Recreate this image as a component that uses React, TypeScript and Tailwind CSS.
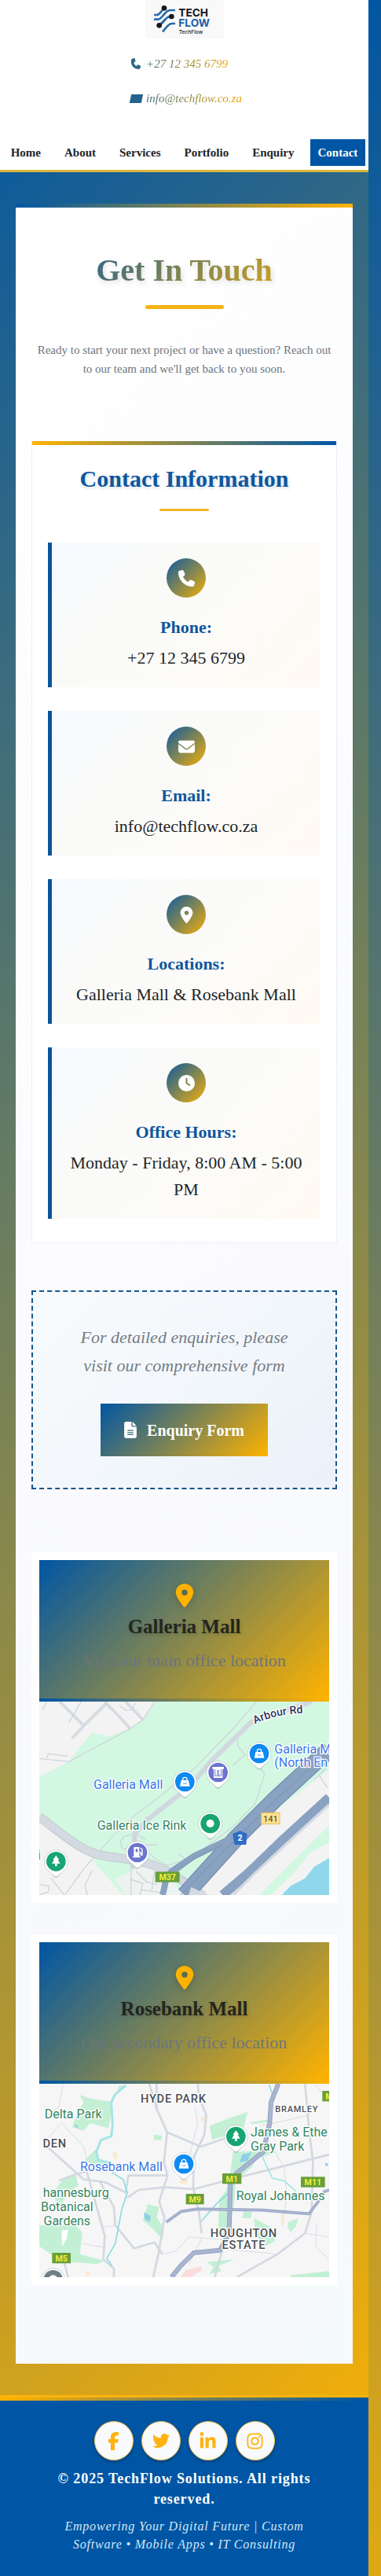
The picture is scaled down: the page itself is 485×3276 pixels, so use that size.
import type { ReactNode } from "react";
import {
  FaPhone,
  FaEnvelope,
  FaLocationDot,
  FaClock,
  FaFileLines,
  FaFacebookF,
  FaTwitter,
  FaLinkedinIn,
  FaInstagram,
} from "react-icons/fa6";

const navItems = ["Home", "About", "Services", "Portfolio", "Enquiry", "Contact"];

const details = [
  { label: "Phone:", value: "+27 12 345 6799", icon: <FaPhone size={21} /> },
  { label: "Email:", value: "info@techflow.co.za", icon: <FaEnvelope size={21} /> },
  { label: "Locations:", value: "Galleria Mall & Rosebank Mall", icon: <FaLocationDot size={21} /> },
  { label: "Office Hours:", value: "Monday - Friday, 8:00 AM - 5:00 PM", icon: <FaClock size={21} /> },
];

const socials = [
  { name: "Facebook", icon: <FaFacebookF size={23} /> },
  { name: "Twitter", icon: <FaTwitter size={22} /> },
  { name: "LinkedIn", icon: <FaLinkedinIn size={23} /> },
  { name: "Instagram", icon: <FaInstagram size={23} /> },
];

function Logo() {
  return (
    <svg viewBox="555 0 300 147" className="h-[49px] w-[100px]" role="img" aria-label="TechFlow">
      <rect x="555" y="0" width="300" height="147" fill="#f9f9f9" />
      <g fill="none" stroke="#2b6cab" strokeWidth="8">
        <path d="M588 57h10c8 0 12-6 17-12l10-13" />
        <path d="M588 74h14c10 0 14-7 20-14l12-13c5-6 9-8 18-8h17" />
        <path d="M610 97l14-14c7-8 12-18 22-19h8" />
        <path d="M621 121l18-21c6-7 9-10 17-10h13" />
        <path d="M607 98l26-26" />
      </g>
      <g fill="#15171c">
        <circle cx="627" cy="31" r="10" />
        <circle cx="655" cy="63" r="10" />
        <circle cx="608" cy="97" r="10" />
      </g>
      <g fontFamily="Inter, sans-serif" fontWeight="700">
        <text x="682" y="64" fontSize="41" fill="#15171c">TECH</text>
        <text x="682" y="102" fontSize="41" fill="#1d5fa6">FLOW</text>
        <text x="683" y="129" fontSize="20" fontWeight="500" fill="#15171c">TechFlow</text>
      </g>
    </svg>
  );
}

function Pin({ x, y, color, children }: { x: number; y: number; color: string; children?: ReactNode }) {
  return (
    <g transform={`translate(${x} ${y})`}>
      <path d="M0 62c-8 0-12-10-24-21A46 46 0 1 1 24 41C12 52 8 62 0 62z" fill="#8b9399" opacity="0.45" />
      <path d="M0 57c-8 0-12-8-24-18A44 44 0 1 1 24 39C12 49 8 57 0 57z" fill="#fff" />
      <circle r="37" fill={color} />
      {children}
    </g>
  );
}

function Bag() {
  return (
    <g>
      <path d="M-14-6h28l5 23h-38z" fill="#fff" />
      <path d="M-8-5v-4a8 8 0 0 1 16 0v4" fill="none" stroke="#fff" strokeWidth="4" />
      <path d="M-6 3c1 6 11 6 12 0" fill="none" stroke="#0d8bf2" strokeWidth="3" />
    </g>
  );
}

function Tree() {
  return <path d="M0-23L12-6H7l9 14H4v10h-8V8h-12l9-14h-5z" fill="#fff" />;
}

function Shield({ x, y, w, label }: { x: number; y: number; w: number; label: string }) {
  return (
    <g>
      <rect x={x} y={y} width={w} height="40" fill="#689f38" />
      <text x={x + w / 2} y={y + 32} textAnchor="middle" fontSize="32" fontWeight="700" fill="#f4ee3a">
        {label}
      </text>
    </g>
  );
}

function GalleriaMap() {
  return (
    <svg
      viewBox="150 42 1107 738"
      preserveAspectRatio="xMidYMid slice"
      className="block h-[246px] w-full"
      fontFamily="Roboto, sans-serif"
      role="img"
      aria-label="Map of Galleria Mall"
    >
      <rect x="150" y="42" width="1107" height="738" fill="#f4f3f4" />
      <path d="M590 42H1257V640L640 780H520L150 480V330L262 270L350 160L420 174L496 144L545 110z" fill="#d3f8e2" />
      <path d="M150 480L380 640L150 700z" fill="#f4f3f4" />
      <path d="M355 650L450 690L520 780H470z" fill="#d3f8e2" />
      <path d="M560 660L640 700L700 780H480L440 720z" fill="#eef3f1" />
      <path d="M1257 300V780H690L880 590z" fill="#f4f3f4" />
      <path d="M1257 515L1190 580L990 780H1035L1130 690L1180 620L1257 580z" fill="#d3f8e2" />
      <path d="M1257 638L1200 672L1165 716L1110 745L1076 780H1257z" fill="#8fd8ec" />
      <g fill="none" stroke="#d5dbe1" strokeWidth="11">
        <path d="M228 42L320 134L405 50M400 42L458 102L496 144M480 42L545 110M320 134L275 182" />
      </g>
      <g fill="none" stroke="#cfd5db" strokeWidth="4">
        <path d="M310 42L262 124M455 56L482 76L502 74L518 48M162 76L178 42M590 42L545 112L496 146L262 271L150 259M178 258L185 241L260 250M352 686L324 745L334 780M420 70L402 48" />
        <path d="M980 42L900 135L750 290L600 412L510 480L440 545L320 680L248 780" />
        <path d="M908 180V210L935 245L890 285M990 285L1010 320L975 430L900 510L740 635L640 667L590 640L540 590L600 588M540 590L500 598L470 605L458 578L475 555L520 545L555 570M680 620L705 642M500 680V780M520 690L560 730L600 740M540 760L610 770M500 720L545 735L535 780M590 690L580 760M1200 340L1250 290M1220 325L1250 370M150 740L188 745L184 768L150 780M195 715L245 780" />
      </g>
      <path d="M150 482C240 548 310 612 385 628S550 640 640 690L760 765" fill="none" stroke="#c2cad2" strokeWidth="34" />
      <path d="M150 482C240 548 310 612 385 628S550 640 640 690L780 780" fill="none" stroke="#d3dae2" strokeWidth="28" />
      <path d="M1190 42L960 120L810 265L720 370L560 495L515 545L505 680" fill="none" stroke="#d2d7df" strokeWidth="19" />
      <path d="M1257 225L1050 415L900 565L705 780" fill="none" stroke="#7890b0" strokeWidth="65" />
      <path d="M1257 225L1050 415L900 565L705 780" fill="none" stroke="#8aa2c1" strokeWidth="57" />
      <path d="M1257 228L1050 418L900 568L690 780" fill="none" stroke="#7890b0" strokeWidth="3" />
      <path d="M890 560L740 632L655 690C625 715 635 740 620 780" fill="none" stroke="#8aa2c1" strokeWidth="24" />
      <path d="M850 588L740 644L665 700" fill="none" stroke="#7890b0" strokeWidth="3" />
      <path d="M1257 408L1080 570L950 695L850 780" fill="none" stroke="#8aa2c1" strokeWidth="36" />
      <path d="M1257 435L1090 588L970 700L890 780" fill="none" stroke="#d3dae2" strokeWidth="10" />
      <path d="M730 750L800 780H720z" fill="#d3dae2" />
      <g strokeLinejoin="round" strokeWidth="8" stroke="#fff" paintOrder="stroke">
        <defs>
          <path id="arbour" d="M974 128Q1042 92 1150 86" />
        </defs>
        <text fontSize="42" fontWeight="500" fill="#273459">
          <textPath href="#arbour">Arbour Rd</textPath>
        </text>
        <g fontSize="48" fill="#3b78e7">
          <text x="357" y="375">Galleria Mall</text>
          <text x="1048" y="240">Galleria M</text>
          <text x="1048" y="292">(North En</text>
        </g>
        <text x="371" y="532" fontSize="48" fill="#348561">Galleria Ice Rink</text>
        <text x="156" y="644" fontSize="48" textAnchor="end" fill="#348561">i</text>
      </g>
      <Pin x={706} y={348} color="#0d8bf2"><Bag /></Pin>
      <Pin x={990} y={240} color="#0d8bf2"><Bag /></Pin>
      <Pin x={833} y={312} color="#6b74ce">
        <path d="M-22-21h44v8h-5v34h-34v-34h-5z" fill="#fff" />
        <path d="M-12-12v25h24v-25M0-10v22M-5-5H5M-5 6H5" fill="none" stroke="#6b74ce" strokeWidth="3" />
      </Pin>
      <Pin x={803} y={507} color="#17a673"><circle r="15" fill="#fff" /></Pin>
      <Pin x={525} y={618} color="#6b74ce">
        <path d="M-14-21H7v35h4v5h-29v-5h4z" fill="#fff" />
        <path d="M-7-14H1V-2H-7z" fill="#6b74ce" />
        <path d="M8 0h5v9h5v-20l-6-7" fill="none" stroke="#fff" strokeWidth="4" />
      </Pin>
      <Pin x={214} y={652} color="#17a673"><Tree /></Pin>
      <rect x="998" y="466" width="70" height="43" fill="#fde293" stroke="#e4bd4f" strokeWidth="3" />
      <text x="1033" y="500" textAnchor="middle" fontSize="33" fontWeight="500" fill="#6d5a28">141</text>
      <path d="M917 535L944 546L940 588H895L889 546z" fill="#2f6cc4" />
      <text x="917" y="574" textAnchor="middle" fontSize="32" fontWeight="700" fill="#fff">2</text>
      <Shield x={593} y={691} w={93} label="M37" />
    </svg>
  );
}

function RosebankMap() {
  return (
    <svg
      viewBox="150 30 1107 738"
      preserveAspectRatio="xMidYMid slice"
      className="block h-[246px] w-full"
      fontFamily="Roboto, sans-serif"
      role="img"
      aria-label="Map of Rosebank Mall"
    >
      <rect x="150" y="30" width="1107" height="738" fill="#f6f6f7" />
      <g fill="#c3f0d5">
        <path d="M302 72L350 88L430 98L415 200L345 180L318 210L275 195L300 130L320 100z" />
        <path d="M800 190L880 160L945 138L930 200L880 225L810 243z" />
        <path d="M588 224L620 228L615 246L588 244z" />
        <path d="M890 290L1000 285L960 350L900 400L895 480L870 610L832 600L838 470L862 440L880 370z" />
        <path d="M955 178L1030 165V176L960 184zM990 285L1060 290L1000 310z" />
        <path d="M565 490L608 500L598 540L625 580L622 625L590 590L545 550z" />
        <path d="M930 515L962 518L958 543H925zM970 543L1040 580L1050 630L1010 652L975 600zM1100 558L1138 543L1130 575L1110 597L1098 578z" />
        <path d="M150 570H290L315 600L305 680L400 705L370 718L290 712H240L150 650z" />
        <path d="M250 385L290 378L300 420L260 440L220 520L205 440z" />
        <path d="M325 320L365 280L372 320L405 330L390 345L350 335zM790 710L895 700L835 725L845 745L800 757L815 730zM1110 760L1257 745V768H1110zM455 35L475 40L450 60z" />
      </g>
      <path d="M690 768L710 740L770 726L772 740L730 768z" fill="#fbdcdc" />
      <g fill="#fbe9cf">
        <path d="M768 155h14v20h-14zM432 290h14v30l-14-8zM685 395h30v18l-30-4zM322 745l24 6-10 17zM1075 510l12 4-4 58h-10z" />
      </g>
      <g fill="#8dd0e6">
        <path d="M925 300L960 292L945 325L915 330zM550 520L575 535L572 558L552 545zM245 585l18 2-14 12zM285 183l14 10-10 5z" />
        <circle cx="1247" cy="338" r="6" />
      </g>
      <path d="M235 590l25-5-5 35-18 30z" fill="#fff" />
      <g fill="none" stroke="#d3d8e1" strokeWidth="8" strokeLinejoin="round">
        <path d="M570 30L600 130L638 215L626 330L640 380L625 425L608 480L628 540L605 680L585 768" />
        <path d="M598 30V130M755 30L760 80L788 150L780 225L740 310L738 430L760 520L770 600" />
        <path d="M638 215L768 270L870 235M485 465L530 435L630 425L740 432L900 390L1060 350L1257 300" />
        <path d="M180 270L320 395L400 405L480 445L490 380L640 380" />
        <path d="M330 360L400 610L395 700L435 735V768M380 400L435 500L440 570L512 658L590 635L620 680" />
        <path d="M1165 30L1180 200L1195 330L1190 520L1165 600L1060 680L980 725L905 768M850 660L820 768M245 710L260 768M225 400L290 375L345 360" />
      </g>
      <g fill="none" stroke="#d9dde4" strokeWidth="3">
        <path d="M240 30L225 120L180 150M180 240L235 180L320 270L340 360M725 300L755 180L745 120M1000 190L1180 150M1045 280L1085 350L1095 450L1085 530M1165 600L1257 615M1210 560L1205 650L1257 700M620 680L670 670L720 615L860 625M850 660L1060 680M720 720L770 620M316 640L400 655M390 578L440 570M1205 35L1257 95" />
      </g>
      <g fill="none" stroke="#a4e5e5" strokeWidth="9">
        <path d="M480 36L440 70L425 100L430 190L425 230L385 245L368 290L375 320L410 330" />
        <path d="M1000 305L1040 390L1085 400L1130 440" strokeWidth="5" />
      </g>
      <path d="M410 325L430 370L470 395L486 445L465 510L440 640L408 695L428 725M870 450L830 485L768 555M1028 34L1040 70" fill="none" stroke="#8edbe5" strokeWidth="5" />
      <g fill="none" strokeLinejoin="round">
        <path d="M1063 30L1035 100L1030 180L1005 290L905 370L880 405L875 600L840 665L740 675L690 725L655 768" stroke="#95a3c2" strokeWidth="18" />
        <path d="M1063 30L1035 100L1030 180L1005 290L905 370L880 405L875 600L840 665L740 675L690 725L655 768" stroke="#a9b5d1" strokeWidth="12" />
        <path d="M635 558L690 518L750 508L1000 512L1180 526L1215 480L1240 440L1257 436" stroke="#95a3c2" strokeWidth="11" />
        <path d="M635 558L690 518L750 508L1000 512L1180 526L1215 480L1240 440L1257 436" stroke="#a9b5d1" strokeWidth="7" />
      </g>
      <Shield x={1231} y={57} w={70} label="M1" />
      <Shield x={849} y={372} w={73} label="M1" />
      <Shield x={1149} y={385} w={92} label="M11" />
      <Shield x={710} y={450} w={69} label="M9" />
      <Shield x={199} y={675} w={71} label="M5" />
      <g strokeLinejoin="round" strokeWidth="8" stroke="#fff" paintOrder="stroke">
        <g fontSize="48" fill="#348561">
          <text x="170" y="162">Delta Park</text>
          <text x="957" y="232">James &amp; Ethe</text>
          <text x="957" y="284">Gray Park</text>
          <text x="902" y="475">Royal Johannes</text>
          <text x="416" y="463" textAnchor="end">hannesburg</text>
          <text x="356" y="516" textAnchor="end">Botanical</text>
          <text x="345" y="569" textAnchor="end">Gardens</text>
        </g>
        <text x="306" y="362" fontSize="48" fill="#3b78e7">Rosebank Mall</text>
        <g fontSize="44" fontWeight="500" fill="#4b4f55" className="tracking-wider">
          <text x="537" y="102">HYDE PARK</text>
          <text x="255" y="274" textAnchor="end">DEN</text>
          <text x="931" y="616" textAnchor="middle">HOUGHTON</text>
          <text x="931" y="660" textAnchor="middle">ESTATE</text>
          <text x="1051" y="138" fontSize="33">BRAMLEY</text>
        </g>
      </g>
      <Pin x={901} y={231} color="#17a673"><Tree /></Pin>
      <Pin x={702} y={336} color="#0d8bf2"><Bag /></Pin>
      <Pin x={203} y={778} color="#6f7f88"><circle r="18" fill="#fff" /></Pin>
    </svg>
  );
}

function MapCard({ title, text, children }: { title: string; text: string; children: ReactNode }) {
  return (
    <article className="bg-white p-[10px]">
      <div className="flex flex-col items-center bg-[linear-gradient(135deg,#0056a4,#ffb300)] pt-[30px] pb-[31px] text-center">
        <FaLocationDot size={30} className="text-[#ffb300] drop-shadow-[0_2px_4px_rgba(0,0,0,0.2)]" />
        <h3 className="mt-[6px] text-[25px] leading-[38px] font-bold text-[#22251f] [text-shadow:1px_2px_4px_rgba(0,0,0,0.15)]">
          {title}
        </h3>
        <p className="mt-[7px] text-[22px] leading-[34px] text-[#6c757d]">{text}</p>
      </div>
      <div className="h-1 bg-[linear-gradient(90deg,#0056a4,#ffb300)]" />
      {children}
    </article>
  );
}

export default function App() {
  return (
    <div className="min-h-screen bg-[linear-gradient(135deg,#0056a4,#ffb300)] bg-[length:calc(100%-16px)_100%] pr-4 font-['Liberation_Serif',serif] text-[#212529]">
      <header className="border-b-3 border-[#dbb63c] bg-white pb-[5px]">
        <div className="flex flex-col items-center">
          <Logo />
          <address className="mt-[10px] w-fit pl-1 text-[15px] leading-[44px]">
            <a href="tel:+27123456799" className="flex items-center gap-[5px]">
              <span className="flex w-4 justify-center">
                <FaPhone size={14} className="-skew-x-12 text-[#2a6785]" />
              </span>
              <span className="bg-[linear-gradient(90deg,#3f6f7a,#f0a800)] bg-clip-text text-transparent">
                +27 12 345 6799
              </span>
            </a>
            <a href="mailto:info@techflow.co.za" className="flex items-center gap-[5px]">
              <span className="flex w-4 justify-center">
                <span className="h-[11px] w-[15px] -skew-x-12 bg-[#22648d]" />
              </span>
              <span className="bg-[linear-gradient(90deg,#3f6f7a,#f0a800)] bg-clip-text text-transparent">
                info@techflow.co.za
              </span>
            </a>
          </address>
        </div>
        <nav className="mt-[30px] flex justify-center gap-[10px] text-[15px] leading-[34px] font-bold">
          {navItems.map((item) => (
            <a
              key={item}
              href={`#${item.toLowerCase()}`}
              className={item === "Contact" ? "bg-[#0056a4] px-[10px] text-white" : "px-[10px]"}
            >
              {item}
            </a>
          ))}
        </nav>
      </header>

      <main className="px-5 py-10">
        <div className="bg-[linear-gradient(135deg,#ffffff,#f8f9fd_70%,#f5fafd)]">
          <div className="h-[5px] bg-[linear-gradient(90deg,#0056a4,#ffb300)]" />
          <div className="px-5 pt-[50px] pb-[100px]">
            <div className="flex flex-col items-center text-center">
              <h1 className="w-full bg-[linear-gradient(135deg,#0056a4,#ffb300)] bg-clip-text text-[40px] leading-[60px] font-bold text-transparent drop-shadow-[2px_3px_3px_rgba(0,0,0,0.12)]">
                Get In Touch
              </h1>
              <div className="mt-[14px] h-[5px] w-[100px] rounded-full bg-[#f7b314]" />
              <p className="mt-10 px-[5px] text-[15px] leading-6 text-[#6c757d]">
                Ready to start your next project or have a question? Reach out to our team and we'll get back to you
                soon.
              </p>
            </div>

            <section className="mt-20 border-x border-b border-[#e9f0f7] bg-white">
              <div className="h-[5px] bg-[linear-gradient(90deg,#ffb300,#0056a4)]" />
              <div className="flex flex-col items-center px-5 pt-5 pb-[30px]">
                <h2 className="text-[30px] leading-[45px] font-bold text-[#0f569c] [text-shadow:1px_2px_4px_rgba(0,86,164,0.2)]">
                  Contact Information
                </h2>
                <div className="mt-4 h-[3px] w-[63px] rounded-full bg-[#efb526]" />
                <dl className="mt-10 flex w-full flex-col gap-[30px]">
                  {details.map((d) => (
                    <div
                      key={d.label}
                      className="flex flex-col items-center border-l-5 border-[#0a549b] bg-[linear-gradient(135deg,#f6faff,#fafaf9_30%,#fcfbf8_65%,#fffaf2)] p-5 text-center"
                    >
                      <span className="flex size-[50px] items-center justify-center rounded-full bg-[linear-gradient(135deg,#0a5aa0,#f5b00a)] text-white">
                        {d.icon}
                      </span>
                      <dt className="mt-5 text-[22px] leading-[35px] font-bold text-[#0f569c]">{d.label}</dt>
                      <dd className="mt-[5px] text-[22px] leading-[34px]">{d.value}</dd>
                    </div>
                  ))}
                </dl>
              </div>
            </section>

            <section className="mt-[60px] flex flex-col items-center border-2 border-dashed border-[#17558a] bg-[linear-gradient(135deg,#f8fbfe,#f1f6fa_60%,#ebf0fa)] p-10 text-center">
              <p className="text-[22px] leading-9 text-[#757c85] italic">
                For detailed enquiries, please visit our comprehensive form
              </p>
              <a
                href="#enquiry"
                className="mt-[30px] flex h-[67px] items-center gap-[13px] bg-[linear-gradient(135deg,#0056a4,#ffb300)] px-[30px] text-[20px] font-bold text-white"
              >
                <FaFileLines size={21} className="w-4" />
                Enquiry Form
              </a>
            </section>

            <section className="mt-20 flex flex-col gap-10">
              <MapCard title="Galleria Mall" text="Visit our main office location">
                <GalleriaMap />
              </MapCard>
              <MapCard title="Rosebank Mall" text="Our secondary office location">
                <RosebankMap />
              </MapCard>
            </section>
          </div>
        </div>
      </main>

      <footer className="border-t-3 border-[#ffb30f] bg-[#0056a4] pb-[29px] text-center text-white">
        <div className="h-1 bg-[linear-gradient(90deg,#ffb300,#0056a4)]" />
        <div className="mt-[26px] flex justify-center gap-[10px]">
          {socials.map((s) => (
            <a
              key={s.name}
              href={`#${s.name.toLowerCase()}`}
              aria-label={s.name}
              className="flex size-[50px] items-center justify-center rounded-full border border-[#f3bd4a] bg-[#f8fafd] text-[#ffb30f] shadow-[0_2px_4px_rgba(0,0,0,0.25)]"
            >
              {s.icon}
            </a>
          ))}
        </div>
        <p className="mt-[10px] px-[50px] text-[18px] leading-[26px] font-bold tracking-wider">
          © 2025 TechFlow Solutions. All rights reserved.
        </p>
        <p className="mt-[10px] px-[50px] text-[16px] leading-[23px] tracking-wider text-[#d5e6f5] italic">
          Empowering Your Digital Future | Custom Software • Mobile Apps • IT Consulting
        </p>
      </footer>
    </div>
  );
}
